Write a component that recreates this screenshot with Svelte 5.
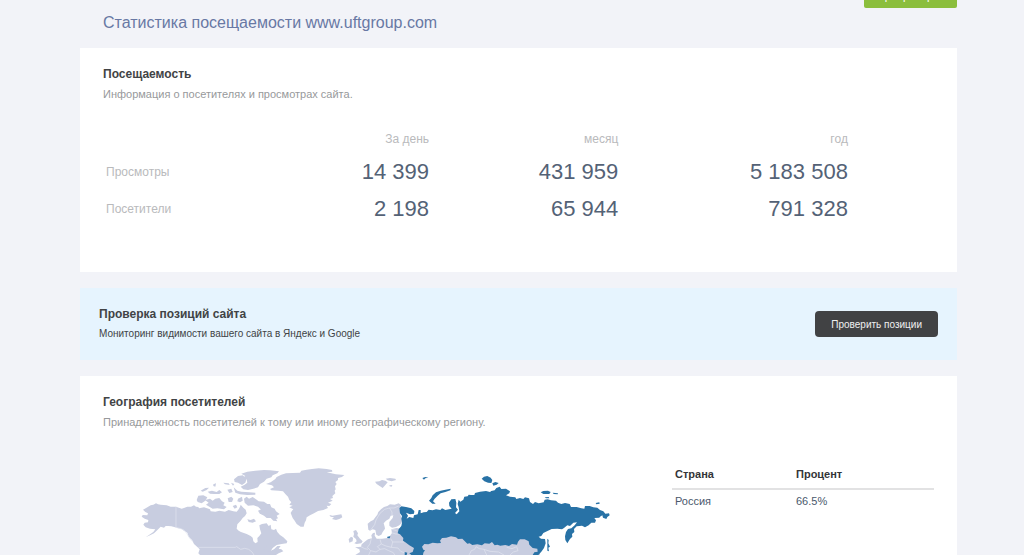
<script>
  const site = 'www.uftgroup.com';

  const periods = ['За день', 'месяц', 'год'];

  const rows = [
    { name: 'Просмотры', values: ['14 399', '431 959', '5 183 508'] },
    { name: 'Посетители', values: ['2 198', '65 944', '791 328'] }
  ];

  const countries = [
    { name: 'Россия', percent: '66.5%' }
  ];

  /* --------------------------------------------
   * Map outlines, one list per part of the world
   */
  const america = [
    'M47 145L62 136 70 134 78 130 84 133 92 134 110 136 122 140 138 140 155 146 164 143 172 140 183 140 192 136 198 140 205 141 207 145 222 142 240 148 242 154 256 155 268 152 285 155 296 150 310 154 320 155 326 148 330 140 332 134 340 143 347 149 350 160 345 168 338 174 332 182 322 193 320 206 326 212 333 216 350 222 362 228 368 233 370 244 376 250 383 246 382 234 388 228 394 220 390 208 388 196 396 192 410 190 416 198 422 194 424 208 432 210 438 206 442 216 450 225 460 232 472 244 470 250 455 252 440 255 428 264 422 272 432 268 442 258 452 258 446 266 454 268 460 274 446 280 438 285H210L205 280 209 268 202 261 192 252 186 240 176 230 172 218 162 212 155 207 142 204 135 202 124 199 115 198 107 198 102 203 92 200 86 206 80 212 72 220 60 226 47 232 58 224 70 216 76 208 60 206 47 202 40 194 44 188 54 187 55 180 44 176 35 170 38 165 52 166 54 160 46 156 39 149Z',
    'M200 120L205 107 220 106 232 112 226 122 215 130 203 126Z',
    'M225 120L240 116 248 122 256 116 268 114 276 124 284 128 280 136 290 141 282 148 262 145 248 146 238 140 228 134 236 128Z',
    'M212 92L226 84 237 83 230 90 218 95Z',
    'M233 95L246 92 260 96 268 90 276 97 268 102 252 102 240 101Z',
    'M250 73L258 70 256 80 250 78Z',
    'M280 68L296 70 299 75 285 73Z',
    'M292 89L304 86 308 96 298 99Z',
    'M293 115L304 110 310 116 306 126 296 126Z',
    'M311 82L322 92 334 95 358 97 376 98 376 104 352 105 330 103 316 98Z',
    'M312 58L324 48 338 46 350 56 346 68 336 75 324 68 314 66Z',
    'M324 116L336 110 338 122 330 127 322 124Z',
    'M303 68L313 72 309 77Z',
    'M352 178L362 180 372 176 378 184 368 188 356 186Z',
    'M308 138L318 134 322 142 314 146Z',
    'M334 41L352 35 376 32 402 30 420 31 447 34 442 40 428 46 424 52 410 56 402 65 390 72 384 82 370 86 354 90 340 88 332 80 344 74 352 68 350 58 338 53 346 48Z',
    'M342 116L350 110 357 116 368 111 378 118 386 124 402 125 412 132 420 132 424 142 434 146 438 154 449 162 440 167 444 175 438 177 442 184 430 182 422 174 410 174 402 167 392 162 394 150 384 140 370 136 354 137 344 128Z',
    'M384 152L394 148 404 154 400 163 390 162Z',
    'M400 264L414 256 428 262 422 272 406 276Z',
    'M408 72L422 67 436 57 440 51 454 44 468 40 488 39 510 38 514 32 530 29 546 27 566 25 590 27 606 30 607 35 590 37 604 40 618 43 643 45 636 51 624 54 624 60 616 66 620 72 615 79 617 88 614 92 616 100 607 108 609 114 600 117 608 122 594 128 604 132 598 138 590 137 594 144 580 150 564 153 552 160 540 166 530 172 528 181 524 188 521 200 512 200 500 192 494 182 488 174 482 159 486 152 490 148 478 142 488 137 478 134 484 127 478 120 474 110 466 102 459 94 446 92 424 91 420 87 432 82 426 76Z',
    'M598 165L608 167 620 165 634 163 637 172 628 177 618 180 606 177 612 172 602 170Z'
  ];

  const europe = [
    'M55 209L53 191 62 184 70 180 76 172 82 164 85 156 93 148 102 141 112 138 120 133 134 134 146 130 154 136 148 144 150 152 151 164 156 176 155 188 148 196 138 201 126 203 118 197 118 186 128 174 130 166 122 167 118 176 108 182 101 190 104 200 105 206 98 216 94 224 86 228 79 224 76 210 68 208 60 212Z',
    'M16 285L30 276 28 268 15 262 33 260 35 253 46 244 54 238 66 235 64 226 69 219 75 218 74 227 80 236 96 236 112 234 120 227 126 219 124 208 140 204 153 206 168 236 196 252 230 272 234 285Z',
    'M10 213L18 210 24 220 22 226 30 236 38 244 34 250 20 252 13 250 20 244 18 237 10 230 12 222Z',
    'M-4 238L3 230 9 233 8 244 -2 248Z',
    'M75 65L88 64 96 60 106 62 113 67 106 75 98 84 90 79 80 72Z',
    'M107 56L120 54 136 56 138 60 125 64 113 61Z',
    'M118 76L127 75 125 80 119 79Z'
  ];

  const asia = 'M205 285L214 262 218 248 268 220 320 222 380 240 480 244 515 228 550 250 565 264 570 285Z';

  const russia = [
    'M148 144L154 139 168 141 184 145 193 153 192 161 180 163 168 158 174 167 170 176 178 171 190 174 192 166 203 163 206 150 212 150 212 160 221 157 230 156 236 149 248 151 258 148 271 150 276 145 286 150 297 148 305 146 298 138 297 128 304 118 316 117 319 128 318 142 324 149 315 159 320 163 328 154 326 142 323 132 326 119 331 125 340 119 343 110 353 109 356 104 363 105 373 105 375 99 390 95 408 93 420 96 424 93 434 91 439 84 449 80 454 87 468 86 480 94 478 100 468 106 480 110 496 112 499 117 510 114 520 117 525 112 537 115 540 126 549 132 555 126 566 130 581 127 584 119 593 118 603 121 618 122 624 128 634 132 645 129 659 132 663 141 680 141 694 145 703 146 705 138 719 138 730 142 742 143 750 150 760 154 766 161 777 160 779 166 772 171 769 177 759 173 757 166 750 170 748 173 733 174 738 181 735 188 724 188 716 196 705 202 696 197 680 199 672 207 673 216 666 222 667 230 660 237 652 250 646 240 645 229 648 216 654 207 664 205 674 196 681 187 670 188 660 198 652 196 642 204 636 208 622 206 605 207 594 212 580 219 574 228 566 230 573 236 585 237 587 250 582 264 574 275 565 285H548L553 277 563 275 562 266 548 264 538 254 536 244 524 238 510 238 504 245 501 254 486 252 477 258 466 255 451 257 442 254 434 256 426 246 418 251 404 250 396 256 382 253 367 255 359 250 352 251 337 236 324 237 318 232 303 229 289 233 276 234 270 242 273 249 262 250 248 248 235 253 223 252 216 260 220 269 225 271 220 278 219 285H184L178 280 188 276 192 264 178 256 166 247 159 242 160 234 150 223 143 220 146 208 154 198 156 188 154 176 156 168 150 160Z',
    'M237 122L244 114 248 106 258 97 272 92 286 89 302 86 301 91 286 96 272 100 263 107 254 116 249 124 257 131 247 131Z',
    'M217 54L226 51 235 53 226 55 222 59Z',
    'M395 56L402 50 412 48 422 53 427 60 424 69 414 68 403 64Z',
    'M427 70L436 66 446 69 440 74 430 77Z',
    'M572 97L580 93 594 92 602 96 598 102 580 102Z',
    'M608 98L624 100 623 103 611 102Z',
    'M584 112L596 111 598 115 588 115Z',
    'M737 129L748 127 749 131 739 133Z',
    'M592 236L596 240 595 250 600 260 595 263 597 274 592 272 592 256Z',
    'M112 230L121 229 119 235 112 234Z',
    'M164 276L172 278 170 285H164Z'
  ];

  /* thin lines between countries */
  const borders = {
    america: 'M138 140V202L152 206 162 210 170 220 180 236 188 244M205 262H316L320 260 332 268 344 265 356 268 366 276 372 285',
    europe: 'M62 210L74 194 78 180 90 160 104 148 118 144 132 144 146 138M118 144L126 156 126 167M64 235L60 252 52 262 62 272 56 285M33 260L44 266 54 268M90 238L94 252 82 260 90 268 104 266 116 272M94 252L108 258 124 262 128 246 122 236M124 218L138 222 148 222M126 208L140 212M128 246L148 246 162 246M124 262L144 264 152 274 168 280M62 272L78 276 90 268M116 272L130 278 134 285',
    asia: 'M357 285L364 272 374 268 378 260 388 266 402 268 410 285M470 262L486 266 500 260 504 272 490 276 480 285M402 268L420 274 446 276 462 285'
  };
</script>

<div class="page">
  <header class="top">
    <h1>Статистика посещаемости {site}</h1>
    <button class="recheck" type="button">Перепроверить</button>
  </header>

  <section class="card card--stats">
    <h2>Посещаемость</h2>
    <p class="hint">Информация о посетителях и просмотрах сайта.</p>

    <table class="stats">
      <thead>
        <tr>
          <td></td>
          {#each periods as period}
          <th scope="col">{period}</th>
          {/each}
        </tr>
      </thead>
      <tbody>
        {#each rows as row}
        <tr>
          <th scope="row">{row.name}</th>
          {#each row.values as value}
          <td>{value}</td>
          {/each}
        </tr>
        {/each}
      </tbody>
    </table>
  </section>

  <section class="banner">
    <div>
      <h2>Проверка позиций сайта</h2>
      <p>Мониторинг видимости вашего сайта в Яндекс и Google</p>
    </div>
    <button class="check" type="button">Проверить позиции</button>
  </section>

  <section class="card card--geo">
    <h2>География посетителей</h2>
    <p class="hint">Принадлежность посетителей к тому или иному географическому региону.</p>

    <div class="geo">
      <svg class="map" viewBox="-81 0 1611 285" role="img" aria-label="Карта посетителей">
        <g class="land">
          {#each america as d}
          <path {d} />
          {/each}
          <path class="border" d={borders.america} />
        </g>
        <g class="land" transform="translate(660 0)">
          {#each europe as d}
          <path {d} />
          {/each}
          <path d={asia} />
          <path class="border" d={borders.europe} />
          <path class="border" d={borders.asia} />
          {#each russia as d}
          <path class="active" {d} />
          {/each}
        </g>
      </svg>

      <table class="countries">
        <thead>
          <tr>
            <th scope="col">Страна</th>
            <th scope="col">Процент</th>
          </tr>
        </thead>
        <tbody>
          {#each countries as country}
          <tr>
            <td>{country.name}</td>
            <td>{country.percent}</td>
          </tr>
          {/each}
        </tbody>
      </table>
    </div>
  </section>
</div>

<style>
  :global(body) {
    background: #f2f3f8;
    overflow: hidden;
  }
  .page {
    display: flex;
    flex-direction: column;
    gap: 16px;
    margin: -17px 67px 0 80px;
    font-family: "Liberation Sans", Arial, sans-serif;
    font-size: 11px;
    color: #414345;
  }
  h1, h2, p {
    margin: 0;
  }
  .top {
    display: flex;
    justify-content: space-between;
    align-items: flex-start;
    padding-left: 23px;
  }
  h1 {
    padding-top: 31px;
    font-size: 16px;
    line-height: 18px;
    font-weight: 300;
    color: #6878a4;
  }
  button {
    border: 0;
    font-family: inherit;
    cursor: pointer;
  }
  .recheck {
    height: 25px;
    padding: 0 7px;
    border-radius: 2px;
    background: #8bbe3d;
    color: #fff;
    font-size: 11px;
  }
  .card {
    padding: 18px 23px 0;
    background: #fff;
  }
  .card--stats {
    padding-bottom: 45px;
  }
  h2 {
    font-size: 12px;
    line-height: 16px;
  }
  .hint {
    padding-top: 4px;
    line-height: 16px;
    color: #97999b;
  }

  .stats {
    width: 90%;
    margin-top: 23px;
    table-layout: fixed;
    border-collapse: collapse;
  }
  .stats th,
  .stats td {
    box-sizing: border-box;
    padding: 0 3px;
    text-align: right;
    font-weight: 400;
  }
  .stats th {
    font-size: 12px;
    color: #b9babc;
  }
  .stats thead tr {
    height: 28px;
  }
  .stats thead td {
    width: 22%;
  }
  .stats thead th:nth-child(2) {
    width: 22%;
  }
  .stats thead th:nth-child(3) {
    width: 25.3%;
  }
  .stats tbody tr {
    height: 37px;
  }
  .stats tbody th {
    text-align: left;
  }
  .stats tbody td {
    font-size: 22px;
    color: #546276;
  }

  .banner {
    display: flex;
    justify-content: space-between;
    align-items: center;
    padding: 18px 19px;
    background: #e6f4fe;
  }
  .banner p {
    padding-top: 4px;
    font-size: 10px;
    line-height: 16px;
  }
  .check {
    height: 26px;
    padding: 0 16px;
    border-radius: 4px;
    background: #414244;
    color: #f0f0f0;
    font-size: 10px;
  }

  .geo {
    display: flex;
    justify-content: space-between;
    align-items: flex-start;
    gap: 32px;
    padding-top: 30px;
  }
  .map {
    flex: 1;
    min-width: 0;
  }
  .land path {
    fill: #c8cde0;
  }
  .land .border {
    fill: none;
    stroke: #e3e6f0;
    stroke-width: 2;
  }
  .land .active {
    fill: #2872a6;
  }
  .countries {
    width: 262px;
    border-collapse: collapse;
    table-layout: fixed;
  }
  .countries th,
  .countries td {
    padding: 0 3px;
    text-align: left;
  }
  .countries th {
    height: 28px;
    border-bottom: 2px solid #e2e2e3;
    color: #333538;
  }
  .countries th:first-child {
    width: 115px;
  }
  .countries td {
    height: 22px;
    color: #4a586c;
  }
</style>
